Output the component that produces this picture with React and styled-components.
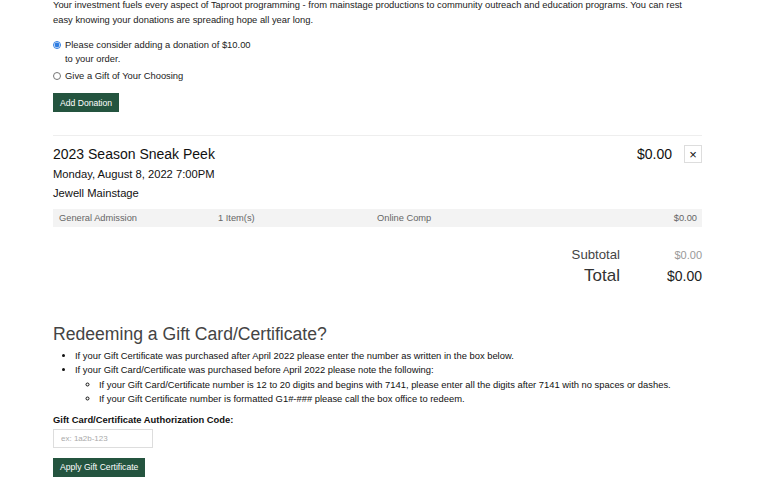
import styled, { createGlobalStyle } from 'styled-components';

const GlobalStyle = createGlobalStyle`
  body {
    margin: 0;
    background: #fff;
    font-family: 'Liberation Sans', Arial, sans-serif;
    color: #222;
  }
`;

const Page = styled.div`
  width: 649px;
  margin: -3px 0 0 53px;
  font-size: 9.4px;
`;

const Intro = styled.p`
  margin: 0;
  line-height: 15px;
  color: #222;
`;

const RadioList = styled.div`
  margin-top: 11px;
  display: flex;
  flex-direction: column;
  gap: 3px;
`;

const RadioRow = styled.label`
  display: flex;
  align-items: flex-start;
  gap: 4px;
  line-height: 14px;
  width: 200px;
`;

const Radio = styled.input`
  width: 8px;
  height: 8px;
  margin: 3px 0 0 0;
  accent-color: #2f7de1;
`;

const GreenButton = styled.button`
  display: block;
  background: #24543f;
  color: #fff;
  border: none;
  border-radius: 0;
  font-family: inherit;
  font-size: 8.6px;
  height: 19px;
  padding: 0 7px;
  margin-top: ${p => p.$mt || 0}px;
`;

const Divider = styled.hr`
  border: none;
  border-top: 1px solid #eeeeee;
  margin: 23px 0 0;
`;

const EventHead = styled.div`
  display: flex;
  align-items: flex-start;
  justify-content: space-between;
  margin-top: 9px;
`;

const EventTitle = styled.h3`
  margin: 0;
  font-size: 14px;
  font-weight: normal;
  line-height: 18px;
  color: #111;
`;

const PriceBox = styled.div`
  display: flex;
  align-items: center;
  gap: 12px;
`;

const Price = styled.span`
  font-size: 14px;
  color: #111;
  line-height: 18px;
`;

const CloseBtn = styled.button`
  width: 18px;
  height: 18px;
  padding: 0;
  background: #fff;
  border: 1px solid #ddd;
  display: flex;
  align-items: center;
  justify-content: center;
  color: #111;
  font-family: inherit;
  font-size: 13px;
`;

const EventLine = styled.div`
  font-size: 11.2px;
  line-height: 19px;
  color: #111;
  margin-top: ${p => p.$mt || 0}px;
`;

const TicketRow = styled.div`
  display: grid;
  grid-template-columns: 159px 159px 1fr auto;
  align-items: center;
  height: 18px;
  margin-top: 6px;
  padding: 0 5px 0 6px;
  background: #f3f3f3;
  color: #666;
  font-size: 9.3px;
`;

const Totals = styled.div`
  display: grid;
  grid-template-columns: auto 82px;
  justify-content: end;
  align-items: baseline;
  margin-top: 18px;
`;

const TotalLabel = styled.span`
  text-align: right;
  font-size: ${p => p.$size}px;
  color: ${p => p.$color};
  line-height: ${p => p.$lh}px;
`;

const TotalValue = styled.span`
  text-align: right;
  font-size: ${p => p.$size}px;
  color: ${p => p.$color};
`;

const SectionTitle = styled.h2`
  margin: 36px 0 0;
  font-size: 17.6px;
  font-weight: normal;
  color: #444;
  line-height: 22px;
`;

const Bullets = styled.ul`
  margin: 4px 0 0;
  padding-left: 22px;
  font-size: 9.4px;
  line-height: 14.4px;
  color: #111;
  list-style: disc;

  ul {
    margin: 0;
    padding-left: 24px;
    list-style: circle;
  }
`;

const FieldLabel = styled.label`
  display: block;
  font-weight: bold;
  font-size: 9.4px;
  margin-top: 7px;
  color: #111;
`;

const CodeInput = styled.input`
  display: block;
  box-sizing: border-box;
  width: 100px;
  height: 19px;
  margin-top: 4px;
  border: 1px solid #ddd;
  padding: 0 7px;
  font-family: inherit;
  font-size: 8px;
  &::placeholder { color: #aaa; }
`;

export default function App() {
  return (
    <>
      <GlobalStyle />
      <Page>
        <Intro>
          Your investment fuels every aspect of Taproot programming - from mainstage productions to community outreach and education programs. You can rest easy knowing your donations are spreading hope all year long.
        </Intro>
        <RadioList>
          <RadioRow>
            <Radio type="radio" name="don" defaultChecked />
            <span>Please consider adding a donation of $10.00 to your order.</span>
          </RadioRow>
          <RadioRow>
            <Radio type="radio" name="don" />
            <span>Give a Gift of Your Choosing</span>
          </RadioRow>
        </RadioList>
        <GreenButton $mt={10}>Add Donation</GreenButton>

        <Divider />
        <EventHead>
          <EventTitle>2023 Season Sneak Peek</EventTitle>
          <PriceBox>
            <Price>$0.00</Price>
            <CloseBtn>×</CloseBtn>
          </PriceBox>
        </EventHead>
        <EventLine $mt={2}>Monday, August 8, 2022 7:00PM</EventLine>
        <EventLine>Jewell Mainstage</EventLine>
        <TicketRow>
          <span>General Admission</span>
          <span>1 Item(s)</span>
          <span>Online Comp</span>
          <span>$0.00</span>
        </TicketRow>

        <Totals>
          <TotalLabel $size={13.2} $color="#444" $lh={20}>Subtotal</TotalLabel>
          <TotalValue $size={11} $color="#999">$0.00</TotalValue>
          <TotalLabel $size={17} $color="#333" $lh={22}>Total</TotalLabel>
          <TotalValue $size={14} $color="#222">$0.00</TotalValue>
        </Totals>

        <SectionTitle>Redeeming a Gift Card/Certificate?</SectionTitle>
        <Bullets>
          <li>If your Gift Certificate was purchased after April 2022 please enter the number as written in the box below.</li>
          <li>
            If your Gift Card/Certificate was purchased before April 2022 please note the following:
            <ul>
              <li>If your Gift Card/Certificate number is 12 to 20 digits and begins with 7141, please enter all the digits after 7141 with no spaces or dashes.</li>
              <li>If your Gift Certificate number is formatted G1#-### please call the box office to redeem.</li>
            </ul>
          </li>
        </Bullets>
        <FieldLabel htmlFor="gc">Gift Card/Certificate Authorization Code:</FieldLabel>
        <CodeInput id="gc" placeholder="ex: 1a2b-123" />
        <GreenButton $mt={10}>Apply Gift Certificate</GreenButton>
      </Page>
    </>
  );
}
